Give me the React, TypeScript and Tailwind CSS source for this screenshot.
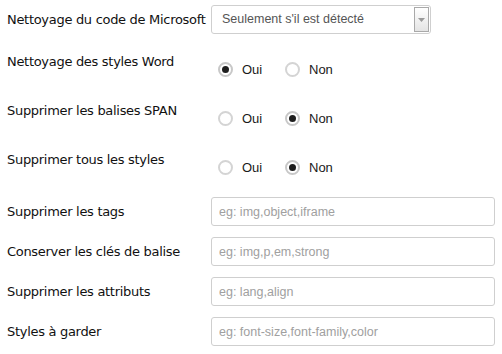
import React from "react";

const labelFont = { fontFamily: '"DejaVu Sans", Verdana, sans-serif' };

const Radio = ({ checked, label }: { checked: boolean; label: string }) => {
  return (
    <label className="flex items-center gap-[9px] mr-[12px]">
      <span
        className={
          "flex h-[15px] w-[15px] items-center justify-center rounded-full border-2 bg-white " +
          (checked ? "border-[#c8c8c8]" : "border-[#d4d4d4]")
        }
      >
        {checked && <span className="h-[7px] w-[7px] rounded-full bg-[#1e1e1e]" />}
      </span>
      <span className="text-[13px] text-[#1a1a1a] font-['Liberation_Sans',Arial,sans-serif] w-[31px]">
        {label}
      </span>
    </label>
  );
};

const RadioRow = ({ label, yes }: { label: string; yes: boolean }) => {
  return (
    <div className="flex h-[49px] items-start">
      <div
        className="w-[204px] pt-[9px] text-[13px] leading-[16px] tracking-[-0.3px] whitespace-nowrap text-[#111]"
        style={labelFont}
      >
        {label}
      </div>
      <div className="flex h-full items-center pl-[7px]">
        <Radio checked={yes} label="Oui" />
        <Radio checked={!yes} label="Non" />
      </div>
    </div>
  );
};

const InputRow = ({ label, placeholder }: { label: string; placeholder: string }) => {
  return (
    <div className="flex h-[29px] items-center mb-[11px]">
      <div
        className="w-[204px] text-[13px] leading-[16px] tracking-[-0.3px] whitespace-nowrap text-[#111]"
        style={labelFont}
      >
        {label}
      </div>
      <input
        className="h-[29px] w-[284px] rounded-[3px] border border-[#cfcfcf] bg-white px-[7px] text-[12.5px] text-[#555] placeholder:text-[#a0a0a0] font-['Liberation_Sans',Arial,sans-serif] outline-none"
        placeholder={placeholder}
      />
    </div>
  );
};

export default function App() {
  return (
    <div className="w-[502px] h-[354px] bg-white pl-[7px] pt-[5px]">
      <div className="flex h-[29px] items-center mb-[11px]">
        <div
          className="w-[204px] text-[13px] leading-[16px] tracking-[-0.3px] whitespace-nowrap text-[#111]"
          style={labelFont}
        >
          Nettoyage du code de Microsoft
        </div>
        <div className="flex h-[29px] w-[220px] items-center justify-between rounded-[3px] border border-[#cfcfcf] bg-white pl-[10px] pr-[1px]">
          <span className="text-[12.5px] text-[#555] font-['Liberation_Sans',Arial,sans-serif]">
            Seulement s'il est détecté
          </span>
          <span className="flex h-[25px] w-[15px] items-center justify-center border border-[#a9a9a9] bg-gradient-to-b from-white to-[#e4e4e4]">
            <svg width="7" height="4" viewBox="0 0 7 4">
              <path d="M0 0h7L3.5 4z" fill="#9a9a9a" />
            </svg>
          </span>
        </div>
      </div>
      <RadioRow label="Nettoyage des styles Word" yes={true} />
      <RadioRow label="Supprimer les balises SPAN" yes={false} />
      <RadioRow label="Supprimer tous les styles" yes={false} />
      <div className="h-[5px]" />
      <InputRow label="Supprimer les tags" placeholder="eg: img,object,iframe" />
      <InputRow label="Conserver les clés de balise" placeholder="eg: img,p,em,strong" />
      <InputRow label="Supprimer les attributs" placeholder="eg: lang,align" />
      <InputRow label="Styles à garder" placeholder="eg: font-size,font-family,color" />
    </div>
  );
}
